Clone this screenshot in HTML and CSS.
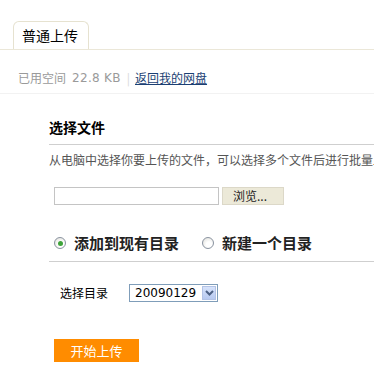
FILE: index.html
```html
<!DOCTYPE html>
<html lang="zh-CN">
<head>
<meta charset="utf-8">
<title>普通上传</title>
<link rel="stylesheet" href="styles.css">
</head>
<body>
<div class="tabbar">
  <div class="tab">普通上传</div>
</div>
<div class="stats">
  <span class="muted">已用空间</span>
  <span class="muted size">22.8 KB</span>
  <span class="sep">|</span>
  <a class="link" href="#">返回我的网盘</a>
</div>
<div class="section">
  <h2 class="heading">选择文件</h2>
  <p class="desc">从电脑中选择你要上传的文件，可以选择多个文件后进行批量上传</p>
  <div class="filerow">
    <span class="fileinput"></span>
    <span class="browse">浏览...</span>
  </div>
  <div class="radiorow">
    <span class="radio checked"><span class="dot"></span></span>
    <span class="rlabel">添加到现有目录</span>
    <span class="radio"></span>
    <span class="rlabel">新建一个目录</span>
  </div>
  <div class="dirrow">
    <span class="dirlabel">选择目录</span>
    <span class="select">
      <span class="selval">20090129</span>
      <span class="selbtn"><svg width="9" height="6" viewBox="0 0 9 6"><path d="M1 1 L4.5 4.5 L8 1" fill="none" stroke="#4d6185" stroke-width="2"/></svg></span>
    </span>
  </div>
  <div class="submit">开始上传</div>
</div>
</body>
</html>
```
FILE: styles.css
```css
* { box-sizing: border-box; }
html, body { margin: 0; padding: 0; background: #fff; }
body {
  width: 374px;
  height: 370px;
  overflow: hidden;
  font-family: "Noto Sans CJK SC", "DejaVu Sans", sans-serif;
  color: #000;
}
.tabbar {
  padding: 21px 0 0 13px;
  border-bottom: 1px solid #ebe7d8;
  display: flex;
}
.tab {
  width: 76px;
  height: 28px;
  border: 1px solid #e6e2d0;
  border-bottom: none;
  border-radius: 6px 6px 0 0;
  font-size: 14px;
  line-height: 27px;
  padding-left: 8px;
  background: #fff;
}
.stats {
  padding: 20px 0 7px 18px;
  height: 44px;
  border-bottom: 1px solid #f2f2f2;
  font-size: 12px;
  line-height: 16px;
  display: flex;
  align-items: center;
}
.muted { color: #9a9a9a; }
.size { margin-left: 6px; font-family: "DejaVu Sans", sans-serif; font-size: 12px; letter-spacing: 0.3px; }
.sep { color: #d8d8d8; margin: 0 5px 0 6px; }
.link { color: #1b3f73; text-decoration: underline; }
.section { margin-left: 49px; overflow: hidden; }
.heading {
  margin: 23px 0 0 0;
  font-size: 14px;
  line-height: 20px;
  font-weight: bold;
  padding-bottom: 7px;
  border-bottom: 1px solid #cfcfcf;
  white-space: nowrap;
}
.desc {
  margin: 7px 0 0 0;
  font-size: 12px;
  line-height: 16px;
  color: #555;
  white-space: nowrap;
}
.filerow {
  margin: 19px 0 0 5px;
  display: flex;
  gap: 3px;
  height: 18px;
}
.fileinput {
  width: 165px;
  height: 18px;
  border: 1px solid #c4c4c4;
  background: #fff;
}
.browse {
  width: 62px;
  height: 18px;
  background: #ece9d8;
  border: 1px solid #dcd8c8;
  font-size: 12px;
  line-height: 16px;
  padding-left: 10px;
  color: #222;
}
.radiorow {
  margin-top: 28px;
  padding: 0 0 8px 5px;
  height: 29px;
  border-bottom: 1px solid #cfcfcf;
  display: flex;
  align-items: center;
}
.radio {
  width: 12px;
  height: 12px;
  border-radius: 50%;
  border: 1px solid #8a93a0;
  background: radial-gradient(circle at 60% 65%, #fff 30%, #dcdcd6 100%);
  display: flex;
  align-items: center;
  justify-content: center;
  margin-right: 8px;
}
.dot {
  width: 5px;
  height: 5px;
  border-radius: 50%;
  background: #3ea33a;
}
.rlabel {
  font-size: 15px;
  font-weight: bold;
  line-height: 20px;
  color: #222;
  margin-right: 23px;
}
.dirrow {
  margin: 22px 0 0 11px;
  display: flex;
  align-items: center;
  height: 18px;
}
.dirlabel {
  font-size: 12px;
  line-height: 16px;
  width: 69px;
}
.select {
  width: 89px;
  height: 18px;
  border: 1px solid #7f9db9;
  display: flex;
  align-items: center;
  justify-content: space-between;
  padding: 1px;
}
.selval {
  font-family: "DejaVu Sans", sans-serif;
  font-size: 12px;
  line-height: 14px;
  padding-left: 4px;
  color: #000;
}
.selbtn {
  width: 14px;
  height: 14px;
  background: linear-gradient(#d7e3fb, #b7c9f0);
  border: 1px solid #b3c3e6;
  display: flex;
  align-items: center;
  justify-content: center;
}
.submit {
  margin: 37px 0 0 5px;
  width: 85px;
  height: 23px;
  background: #ff8c00;
  color: #fff;
  font-size: 13px;
  line-height: 23px;
  text-align: center;
}
```
